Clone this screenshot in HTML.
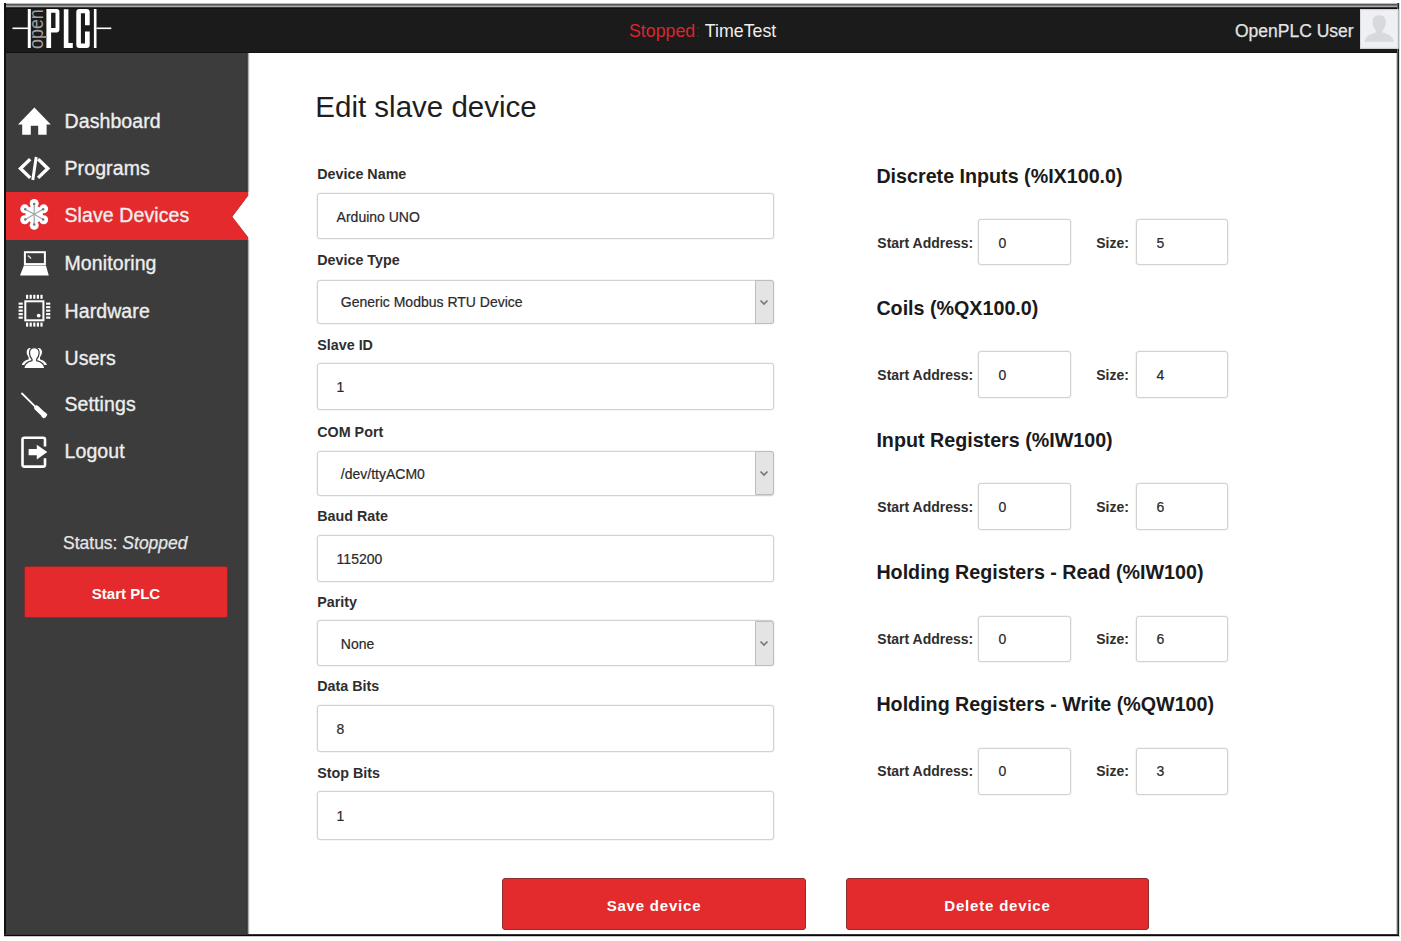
<!DOCTYPE html>
<html><head><meta charset="utf-8">
<style>
html,body{margin:0;padding:0;background:#fff;width:1401px;height:941px;overflow:hidden;position:relative;font-family:"Liberation Sans", sans-serif;}
.t{position:absolute;line-height:1;white-space:nowrap;font-family:"Liberation Sans", sans-serif;}
svg{overflow:visible}
</style></head><body>
<div style="position:absolute;left:5px;top:3px;width:1393px;height:1px;background:#bdbdbd;"></div>
<div style="position:absolute;left:5px;top:4px;width:1393px;height:1px;background:#555;"></div>
<div style="position:absolute;left:5px;top:5px;width:1393px;height:1px;background:#7a7a7a;"></div>
<div style="position:absolute;left:5px;top:6px;width:1393px;height:1px;background:#aaa;"></div>
<div style="position:absolute;left:5px;top:7px;width:1393px;height:1px;background:#3a3a3a;"></div>
<div style="position:absolute;left:5px;top:8px;width:1393px;height:1px;background:#111;"></div>
<div style="position:absolute;left:5px;top:9px;width:1393px;height:43px;background:#1b1b1b;"></div>
<div style="position:absolute;left:5px;top:52px;width:1393px;height:1px;background:#121212;"></div>
<div style="position:absolute;left:6px;top:53px;width:242px;height:881px;background:#3c3c3c;"></div>
<div style="position:absolute;left:246px;top:53px;width:1px;height:881px;background:#343434;"></div>
<div style="position:absolute;left:247px;top:53px;width:1px;height:881px;background:#4e4e4e;"></div>
<div style="position:absolute;left:248px;top:53px;width:1px;height:881px;background:#b0b0b0;"></div>
<div style="position:absolute;left:249px;top:53px;width:1px;height:881px;background:#efefef;"></div>
<div style="position:absolute;left:4px;top:3px;width:2px;height:934px;background:#111;"></div>
<div style="position:absolute;left:1396px;top:53px;width:1px;height:881px;background:#d0d0d0;"></div>
<div style="position:absolute;left:1397px;top:3px;width:1px;height:933px;background:#666;"></div>
<div style="position:absolute;left:1398px;top:3px;width:1px;height:933px;background:#222;"></div>
<div style="position:absolute;left:1399px;top:3px;width:1px;height:933px;background:#ddd;"></div>
<div style="position:absolute;left:4px;top:934px;width:1395px;height:1px;background:#333;"></div>
<div style="position:absolute;left:4px;top:935px;width:1395px;height:1px;background:#0a0a0a;"></div>
<div style="position:absolute;left:4px;top:936px;width:1396px;height:1px;background:#c8c8c8;"></div>
<svg style="position:absolute;left:0;top:0" width="120" height="55" viewBox="0 0 120 55">
<g fill="#fff">
<rect x="12.5" y="27.5" width="15.5" height="1.6"/>
<rect x="27.8" y="9" width="3" height="39"/>
<rect x="93.9" y="9" width="2.6" height="39"/>
<rect x="96.5" y="27.5" width="14.8" height="1.6"/>
<path d="M46.4 8.9 H56.6 Q59.4 8.9 59.4 11.7 V29.6 Q59.4 32.4 56.6 32.4 H51.1 V48 H46.4 Z M51.1 12.8 V28 H55.5 V12.8 Z" fill-rule="evenodd"/>
<path d="M63.8 9.2 H68.4 V43.1 H72.8 V48 H63.8 Z"/>
<path d="M79.3 8.9 H86.7 Q89.7 8.9 89.7 11.9 V25.3 H85 V13.3 H80.9 V43.6 H85 V31.4 H89.7 V45 Q89.7 48 86.7 48 H79.3 Q76.3 48 76.3 45 V11.9 Q76.3 8.9 79.3 8.9 Z" fill-rule="evenodd"/>
</g>
<text x="0" y="0" transform="translate(43.2 48.9) rotate(-90)" font-family="Liberation Sans" font-size="19.5" fill="#a0a0a0" textLength="39.6" lengthAdjust="spacingAndGlyphs">open</text>
</svg>
<div class="t" style="left:629.00px;top:22.93px;font-size:17.8px;font-weight:400;color:#333;font-style:normal;"><span style="color:#d92630">Stopped</span><span style="color:#3a2a28">:</span> <span style="color:#eeeeee">TimeTest</span></div>
<div class="t" style="left:1235.00px;top:23.49px;font-size:17.5px;font-weight:400;color:#e4e4e4;font-style:normal;-webkit-text-stroke:0.25px #e4e4e4;">OpenPLC User</div>
<svg style="position:absolute;left:1359.5px;top:8.5px" width="38.5" height="40" viewBox="0 0 39 40">
<rect x="0" y="0" width="39" height="40" fill="#eef0f3"/>
<rect x="0.5" y="0.5" width="38" height="39" fill="none" stroke="#d8dade" stroke-width="1"/>
<path d="M19.5 6 C14.5 6 12.5 9.5 12.8 13.5 C13 17 14.6 20.2 16.2 21.6 V23.5 C11 25 6 26.5 4.5 33 H34.5 C33 26.5 28 25 22.8 23.5 V21.6 C24.4 20.2 26 17 26.2 13.5 C26.5 9.5 24.5 6 19.5 6 Z" fill="#d6d9dd"/>
</svg>
<svg style="position:absolute;left:6px;top:192px" width="246" height="48" viewBox="0 0 246 48">
<path d="M226.2 24.8 L242.2 3.6 V0 H246 V48 H242.2 V45.6 Z" fill="#fff"/>
<path d="M0 0 H242.2 V3.6 L226.2 24.8 L242.2 45.6 V48 H0 Z" fill="#e42a2d"/>
</svg>
<div class="t" style="left:64.50px;top:111.89px;font-size:19.5px;font-weight:400;color:#eeeeee;font-style:normal;-webkit-text-stroke:0.35px #eeeeee;letter-spacing:0.1px;">Dashboard</div>
<div class="t" style="left:64.50px;top:159.49px;font-size:19.5px;font-weight:400;color:#eeeeee;font-style:normal;-webkit-text-stroke:0.35px #eeeeee;letter-spacing:0.1px;">Programs</div>
<div class="t" style="left:64.50px;top:206.49px;font-size:19.5px;font-weight:400;color:#eeeeee;font-style:normal;-webkit-text-stroke:0.35px #eeeeee;letter-spacing:0.1px;">Slave Devices</div>
<div class="t" style="left:64.50px;top:254.29px;font-size:19.5px;font-weight:400;color:#eeeeee;font-style:normal;-webkit-text-stroke:0.35px #eeeeee;letter-spacing:0.1px;">Monitoring</div>
<div class="t" style="left:64.50px;top:301.89px;font-size:19.5px;font-weight:400;color:#eeeeee;font-style:normal;-webkit-text-stroke:0.35px #eeeeee;letter-spacing:0.1px;">Hardware</div>
<div class="t" style="left:64.50px;top:348.69px;font-size:19.5px;font-weight:400;color:#eeeeee;font-style:normal;-webkit-text-stroke:0.35px #eeeeee;letter-spacing:0.1px;">Users</div>
<div class="t" style="left:64.50px;top:395.49px;font-size:19.5px;font-weight:400;color:#eeeeee;font-style:normal;-webkit-text-stroke:0.35px #eeeeee;letter-spacing:0.1px;">Settings</div>
<div class="t" style="left:64.50px;top:442.29px;font-size:19.5px;font-weight:400;color:#eeeeee;font-style:normal;-webkit-text-stroke:0.35px #eeeeee;letter-spacing:0.1px;">Logout</div>
<svg style="position:absolute;left:0;top:0" width="250" height="500" viewBox="0 0 250 500"><path d="M34.4 107.5 L50.8 124.6 H46.6 V134.8 H38.2 V125.8 H30.8 V134.8 H22.2 V124.6 H18 Z" fill="#fff"/><g fill="none" stroke="#fff" stroke-width="3.4" stroke-linecap="square"><path d="M29 160.3 L20.5 168.5 L29 176.7"/><path d="M39.3 160.3 L47.8 168.5 L39.3 176.7"/><path d="M36 158.5 L33 178.5" stroke-width="3"/></g><g transform="translate(34.2 214.3)"><g fill="#fff"><circle cx="0.00" cy="-10.90" r="4.5"/><circle cx="-9.44" cy="-5.45" r="4.5"/><circle cx="-9.44" cy="5.45" r="4.5"/><circle cx="-0.00" cy="10.90" r="4.5"/><circle cx="9.44" cy="5.45" r="4.5"/><circle cx="9.44" cy="-5.45" r="4.5"/><circle cx="0" cy="0" r="8.8"/></g><g stroke="#9ea6a8" stroke-width="1.2"><line x1="0" y1="0" x2="0.00" y2="-10.30"/><line x1="0" y1="0" x2="-8.92" y2="-5.15"/><line x1="0" y1="0" x2="-8.92" y2="5.15"/><line x1="0" y1="0" x2="-0.00" y2="10.30"/><line x1="0" y1="0" x2="8.92" y2="5.15"/><line x1="0" y1="0" x2="8.92" y2="-5.15"/></g><g fill="#6e7779"><circle cx="0.00" cy="-10.30" r="1.25"/><circle cx="-8.92" cy="-5.15" r="1.25"/><circle cx="-8.92" cy="5.15" r="1.25"/><circle cx="-0.00" cy="10.30" r="1.25"/><circle cx="8.92" cy="5.15" r="1.25"/><circle cx="8.92" cy="-5.15" r="1.25"/></g></g><rect x="24.9" y="252.2" width="20" height="11.9" fill="none" stroke="#fff" stroke-width="2"/><path d="M28 255.5 L31 258.5" stroke="#ddd" stroke-width="1.6"/><path d="M23.9 265.5 H45.9 L48.8 275.6 H20 Z" fill="#fff"/><rect x="25.3" y="301.3" width="18.1" height="19" fill="none" stroke="#fff" stroke-width="2"/><circle cx="38.7" cy="315.6" r="1.9" fill="#fff"/><g fill="#fff"><rect x="26.00" y="294.8" width="2.2" height="4"/><rect x="26.00" y="322.6" width="2.2" height="4"/><rect x="29.60" y="294.8" width="2.2" height="4"/><rect x="29.60" y="322.6" width="2.2" height="4"/><rect x="33.20" y="294.8" width="2.2" height="4"/><rect x="33.20" y="322.6" width="2.2" height="4"/><rect x="36.80" y="294.8" width="2.2" height="4"/><rect x="36.80" y="322.6" width="2.2" height="4"/><rect x="40.40" y="294.8" width="2.2" height="4"/><rect x="40.40" y="322.6" width="2.2" height="4"/><rect x="18.6" y="302.60" width="4.2" height="2.1"/><rect x="46.1" y="302.60" width="4.2" height="2.1"/><rect x="18.6" y="306.10" width="4.2" height="2.1"/><rect x="46.1" y="306.10" width="4.2" height="2.1"/><rect x="18.6" y="309.60" width="4.2" height="2.1"/><rect x="46.1" y="309.60" width="4.2" height="2.1"/><rect x="18.6" y="313.10" width="4.2" height="2.1"/><rect x="46.1" y="313.10" width="4.2" height="2.1"/><rect x="18.6" y="316.60" width="4.2" height="2.1"/><rect x="46.1" y="316.60" width="4.2" height="2.1"/></g><g fill="#fff" stroke="#3c3c3c" stroke-width="1.2"><path d="M21 365.5 C21.5 361.5 24.5 359.8 28 358.8 V357.3 C26.5 355.8 25.8 353.8 26 351.8 C26.3 349.3 27.6 347.3 30.2 347.3 C32.8 347.3 34 349.3 34.2 351.8 C34.4 353.8 33.7 355.8 32.2 357.3 V358.8 C35.7 359.8 38.7 361.5 39.2 365.5 Z"/><path d="M47.6 365.5 C47.1 361.5 44.1 359.8 40.6 358.8 V357.3 C42.1 355.8 42.8 353.8 42.6 351.8 C42.3 349.3 41 347.3 38.4 347.3 C35.8 347.3 34.6 349.3 34.4 351.8 C34.2 353.8 34.9 355.8 36.4 357.3 V358.8 C32.9 359.8 29.9 361.5 29.4 365.5 Z"/><path d="M34.3 347.6 C30.6 347.6 29.3 350.6 29.5 353.4 C29.7 356 30.8 358.2 32 359.2 V360.6 C27.8 361.6 24.2 363.2 23.7 368.6 H44.9 C44.4 363.2 40.8 361.6 36.6 360.6 V359.2 C37.8 358.2 38.9 356 39.1 353.4 C39.3 350.6 38 347.6 34.3 347.6 Z"/></g><g stroke="#fff" stroke-linecap="round"><line x1="22" y1="393.5" x2="36" y2="407.3" stroke-width="1.8"/><line x1="36.5" y1="407.8" x2="44.3" y2="415.3" stroke-width="4.8"/><line x1="43" y1="414" x2="45.5" y2="416.4" stroke-width="5.6" stroke-linecap="butt"/></g><path d="M45 446.5 V439.5 Q45 437.7 43.2 437.7 H24.3 Q22.5 437.7 22.5 439.5 V464.8 Q22.5 466.6 24.3 466.6 H43.2 Q45 466.6 45 464.8 V458.3" fill="none" stroke="#fff" stroke-width="2.6"/><path d="M28.6 449 H36.8 V444.8 L47.3 452 L36.8 459.4 V455.3 H28.6 Z" fill="#fff"/></svg>
<div class="t" style="left:63.00px;top:535.09px;font-size:17.5px;font-weight:400;color:#e6e6e6;font-style:normal;-webkit-text-stroke:0.25px #e6e6e6;">Status: <i>Stopped</i></div>
<div style="position:absolute;left:24px;top:566px;width:203.7px;height:51.60000000000002px;background:#e42a2c;border:1px solid #86292a;box-sizing:border-box;border-radius:2px;"></div>
<div class="t" style="left:24.00px;top:586.00px;font-size:15px;font-weight:700;color:#fff;font-style:normal;width:204px;text-align:center;">Start PLC</div>
<div class="t" style="left:315.30px;top:92.13px;font-size:29.5px;font-weight:400;color:#1e1e1e;font-style:normal;">Edit slave device</div>
<div class="t" style="left:317.30px;top:166.60px;font-size:14.3px;font-weight:700;color:#2e2e2e;font-style:normal;transform:scaleY(1.08);transform-origin:0 12.1px;">Device Name</div>
<div class="t" style="left:317.30px;top:253.00px;font-size:14.3px;font-weight:700;color:#2e2e2e;font-style:normal;transform:scaleY(1.08);transform-origin:0 12.1px;">Device Type</div>
<div class="t" style="left:317.30px;top:338.00px;font-size:14.3px;font-weight:700;color:#2e2e2e;font-style:normal;transform:scaleY(1.08);transform-origin:0 12.1px;">Slave ID</div>
<div class="t" style="left:317.30px;top:424.90px;font-size:14.3px;font-weight:700;color:#2e2e2e;font-style:normal;transform:scaleY(1.08);transform-origin:0 12.1px;">COM Port</div>
<div class="t" style="left:317.30px;top:508.90px;font-size:14.3px;font-weight:700;color:#2e2e2e;font-style:normal;transform:scaleY(1.08);transform-origin:0 12.1px;">Baud Rate</div>
<div class="t" style="left:317.30px;top:595.20px;font-size:14.3px;font-weight:700;color:#2e2e2e;font-style:normal;transform:scaleY(1.08);transform-origin:0 12.1px;">Parity</div>
<div class="t" style="left:317.30px;top:678.90px;font-size:14.3px;font-weight:700;color:#2e2e2e;font-style:normal;transform:scaleY(1.08);transform-origin:0 12.1px;">Data Bits</div>
<div class="t" style="left:317.30px;top:766.10px;font-size:14.3px;font-weight:700;color:#2e2e2e;font-style:normal;transform:scaleY(1.08);transform-origin:0 12.1px;">Stop Bits</div>
<div style="position:absolute;left:317px;top:193.29999999999998px;width:457px;height:46.20000000000002px;background:#fff;border:1px solid #d2d2d2;box-shadow:0 0 0 0.6px #ececec;box-sizing:border-box;border-radius:3px;"></div>
<div class="t" style="left:336.60px;top:209.55px;font-size:14px;font-weight:400;color:#2a2a2a;font-style:normal;transform:scaleY(1.1);transform-origin:0 11.85px;-webkit-text-stroke:0.2px #2a2a2a;">Arduino UNO</div>
<div style="position:absolute;left:317px;top:279.7px;width:457px;height:44.60000000000002px;background:#fff;border:1px solid #d2d2d2;box-shadow:0 0 0 0.6px #ececec;box-sizing:border-box;border-radius:3px;"></div>
<div style="position:absolute;left:754.5px;top:280px;width:19.0px;height:44px;background:#e4e4e4;border:1px solid #bdbdbd;box-sizing:border-box;border-radius:0 3px 3px 0;"></div>
<svg style="position:absolute;left:757px;top:296.00px" width="14" height="12" viewBox="0 0 14 12"><path d="M3.5 4.5 L7 8 L10.5 4.5" fill="none" stroke="#777" stroke-width="1.6"/></svg>
<div class="t" style="left:340.80px;top:294.85px;font-size:14px;font-weight:400;color:#2a2a2a;font-style:normal;transform:scaleY(1.1);transform-origin:0 11.85px;-webkit-text-stroke:0.2px #2a2a2a;">Generic Modbus RTU Device</div>
<div style="position:absolute;left:317px;top:363.4px;width:457px;height:46.50000000000006px;background:#fff;border:1px solid #d2d2d2;box-shadow:0 0 0 0.6px #ececec;box-sizing:border-box;border-radius:3px;"></div>
<div class="t" style="left:336.60px;top:380.45px;font-size:14px;font-weight:400;color:#2a2a2a;font-style:normal;transform:scaleY(1.1);transform-origin:0 11.85px;-webkit-text-stroke:0.2px #2a2a2a;">1</div>
<div style="position:absolute;left:317px;top:451.0px;width:457px;height:44.60000000000002px;background:#fff;border:1px solid #d2d2d2;box-shadow:0 0 0 0.6px #ececec;box-sizing:border-box;border-radius:3px;"></div>
<div style="position:absolute;left:754.5px;top:451.3px;width:19.0px;height:44.0px;background:#e4e4e4;border:1px solid #bdbdbd;box-sizing:border-box;border-radius:0 3px 3px 0;"></div>
<svg style="position:absolute;left:757px;top:467.30px" width="14" height="12" viewBox="0 0 14 12"><path d="M3.5 4.5 L7 8 L10.5 4.5" fill="none" stroke="#777" stroke-width="1.6"/></svg>
<div class="t" style="left:340.80px;top:466.75px;font-size:14px;font-weight:400;color:#2a2a2a;font-style:normal;transform:scaleY(1.1);transform-origin:0 11.85px;-webkit-text-stroke:0.2px #2a2a2a;">/dev/ttyACM0</div>
<div style="position:absolute;left:317px;top:535.2px;width:457px;height:46.59999999999991px;background:#fff;border:1px solid #d2d2d2;box-shadow:0 0 0 0.6px #ececec;box-sizing:border-box;border-radius:3px;"></div>
<div class="t" style="left:336.60px;top:551.95px;font-size:14px;font-weight:400;color:#2a2a2a;font-style:normal;transform:scaleY(1.1);transform-origin:0 11.85px;-webkit-text-stroke:0.2px #2a2a2a;">115200</div>
<div style="position:absolute;left:317px;top:620.4000000000001px;width:457px;height:45.79999999999984px;background:#fff;border:1px solid #d2d2d2;box-shadow:0 0 0 0.6px #ececec;box-sizing:border-box;border-radius:3px;"></div>
<div style="position:absolute;left:754.5px;top:620.7px;width:19.0px;height:45.19999999999993px;background:#e4e4e4;border:1px solid #bdbdbd;box-sizing:border-box;border-radius:0 3px 3px 0;"></div>
<svg style="position:absolute;left:757px;top:637.30px" width="14" height="12" viewBox="0 0 14 12"><path d="M3.5 4.5 L7 8 L10.5 4.5" fill="none" stroke="#777" stroke-width="1.6"/></svg>
<div class="t" style="left:340.80px;top:637.35px;font-size:14px;font-weight:400;color:#2a2a2a;font-style:normal;transform:scaleY(1.1);transform-origin:0 11.85px;-webkit-text-stroke:0.2px #2a2a2a;">None</div>
<div style="position:absolute;left:317px;top:705.2px;width:457px;height:47.09999999999991px;background:#fff;border:1px solid #d2d2d2;box-shadow:0 0 0 0.6px #ececec;box-sizing:border-box;border-radius:3px;"></div>
<div class="t" style="left:336.60px;top:722.35px;font-size:14px;font-weight:400;color:#2a2a2a;font-style:normal;transform:scaleY(1.1);transform-origin:0 11.85px;-webkit-text-stroke:0.2px #2a2a2a;">8</div>
<div style="position:absolute;left:317px;top:791.4000000000001px;width:457px;height:48.29999999999984px;background:#fff;border:1px solid #d2d2d2;box-shadow:0 0 0 0.6px #ececec;box-sizing:border-box;border-radius:3px;"></div>
<div class="t" style="left:336.60px;top:809.05px;font-size:14px;font-weight:400;color:#2a2a2a;font-style:normal;transform:scaleY(1.1);transform-origin:0 11.85px;-webkit-text-stroke:0.2px #2a2a2a;">1</div>
<div class="t" style="left:876.40px;top:167.22px;font-size:19.7px;font-weight:700;color:#1a1a1a;font-style:normal;">Discrete Inputs (%IX100.0)</div>
<div class="t" style="left:877.30px;top:235.95px;font-size:14px;font-weight:700;color:#2e2e2e;font-style:normal;transform:scaleY(1.06);transform-origin:0 11.85px;">Start Address:</div>
<div style="position:absolute;left:978px;top:218.8px;width:92.5px;height:46.69999999999999px;background:#fff;border:1px solid #d2d2d2;box-shadow:0 0 0 0.6px #ececec;box-sizing:border-box;border-radius:3px;"></div>
<div class="t" style="left:998.50px;top:235.95px;font-size:14px;font-weight:400;color:#2a2a2a;font-style:normal;transform:scaleY(1.1);transform-origin:0 11.85px;-webkit-text-stroke:0.2px #2a2a2a;">0</div>
<div class="t" style="left:1096.20px;top:235.95px;font-size:14px;font-weight:700;color:#2e2e2e;font-style:normal;transform:scaleY(1.06);transform-origin:0 11.85px;">Size:</div>
<div style="position:absolute;left:1136px;top:218.8px;width:92px;height:46.69999999999999px;background:#fff;border:1px solid #d2d2d2;box-shadow:0 0 0 0.6px #ececec;box-sizing:border-box;border-radius:3px;"></div>
<div class="t" style="left:1156.50px;top:235.95px;font-size:14px;font-weight:400;color:#2a2a2a;font-style:normal;transform:scaleY(1.1);transform-origin:0 11.85px;-webkit-text-stroke:0.2px #2a2a2a;">5</div>
<div class="t" style="left:876.40px;top:299.12px;font-size:19.7px;font-weight:700;color:#1a1a1a;font-style:normal;">Coils (%QX100.0)</div>
<div class="t" style="left:877.30px;top:368.05px;font-size:14px;font-weight:700;color:#2e2e2e;font-style:normal;transform:scaleY(1.06);transform-origin:0 11.85px;">Start Address:</div>
<div style="position:absolute;left:978px;top:351.1px;width:92.5px;height:46.69999999999999px;background:#fff;border:1px solid #d2d2d2;box-shadow:0 0 0 0.6px #ececec;box-sizing:border-box;border-radius:3px;"></div>
<div class="t" style="left:998.50px;top:368.05px;font-size:14px;font-weight:400;color:#2a2a2a;font-style:normal;transform:scaleY(1.1);transform-origin:0 11.85px;-webkit-text-stroke:0.2px #2a2a2a;">0</div>
<div class="t" style="left:1096.20px;top:368.05px;font-size:14px;font-weight:700;color:#2e2e2e;font-style:normal;transform:scaleY(1.06);transform-origin:0 11.85px;">Size:</div>
<div style="position:absolute;left:1136px;top:351.1px;width:92px;height:46.69999999999999px;background:#fff;border:1px solid #d2d2d2;box-shadow:0 0 0 0.6px #ececec;box-sizing:border-box;border-radius:3px;"></div>
<div class="t" style="left:1156.50px;top:368.05px;font-size:14px;font-weight:400;color:#2a2a2a;font-style:normal;transform:scaleY(1.1);transform-origin:0 11.85px;-webkit-text-stroke:0.2px #2a2a2a;">4</div>
<div class="t" style="left:876.40px;top:431.02px;font-size:19.7px;font-weight:700;color:#1a1a1a;font-style:normal;">Input Registers (%IW100)</div>
<div class="t" style="left:877.30px;top:500.15px;font-size:14px;font-weight:700;color:#2e2e2e;font-style:normal;transform:scaleY(1.06);transform-origin:0 11.85px;">Start Address:</div>
<div style="position:absolute;left:978px;top:483.40000000000003px;width:92.5px;height:46.69999999999999px;background:#fff;border:1px solid #d2d2d2;box-shadow:0 0 0 0.6px #ececec;box-sizing:border-box;border-radius:3px;"></div>
<div class="t" style="left:998.50px;top:500.15px;font-size:14px;font-weight:400;color:#2a2a2a;font-style:normal;transform:scaleY(1.1);transform-origin:0 11.85px;-webkit-text-stroke:0.2px #2a2a2a;">0</div>
<div class="t" style="left:1096.20px;top:500.15px;font-size:14px;font-weight:700;color:#2e2e2e;font-style:normal;transform:scaleY(1.06);transform-origin:0 11.85px;">Size:</div>
<div style="position:absolute;left:1136px;top:483.40000000000003px;width:92px;height:46.69999999999999px;background:#fff;border:1px solid #d2d2d2;box-shadow:0 0 0 0.6px #ececec;box-sizing:border-box;border-radius:3px;"></div>
<div class="t" style="left:1156.50px;top:500.15px;font-size:14px;font-weight:400;color:#2a2a2a;font-style:normal;transform:scaleY(1.1);transform-origin:0 11.85px;-webkit-text-stroke:0.2px #2a2a2a;">6</div>
<div class="t" style="left:876.40px;top:562.92px;font-size:19.7px;font-weight:700;color:#1a1a1a;font-style:normal;">Holding Registers - Read (%IW100)</div>
<div class="t" style="left:877.30px;top:632.25px;font-size:14px;font-weight:700;color:#2e2e2e;font-style:normal;transform:scaleY(1.06);transform-origin:0 11.85px;">Start Address:</div>
<div style="position:absolute;left:978px;top:615.7px;width:92.5px;height:46.700000000000045px;background:#fff;border:1px solid #d2d2d2;box-shadow:0 0 0 0.6px #ececec;box-sizing:border-box;border-radius:3px;"></div>
<div class="t" style="left:998.50px;top:632.25px;font-size:14px;font-weight:400;color:#2a2a2a;font-style:normal;transform:scaleY(1.1);transform-origin:0 11.85px;-webkit-text-stroke:0.2px #2a2a2a;">0</div>
<div class="t" style="left:1096.20px;top:632.25px;font-size:14px;font-weight:700;color:#2e2e2e;font-style:normal;transform:scaleY(1.06);transform-origin:0 11.85px;">Size:</div>
<div style="position:absolute;left:1136px;top:615.7px;width:92px;height:46.700000000000045px;background:#fff;border:1px solid #d2d2d2;box-shadow:0 0 0 0.6px #ececec;box-sizing:border-box;border-radius:3px;"></div>
<div class="t" style="left:1156.50px;top:632.25px;font-size:14px;font-weight:400;color:#2a2a2a;font-style:normal;transform:scaleY(1.1);transform-origin:0 11.85px;-webkit-text-stroke:0.2px #2a2a2a;">6</div>
<div class="t" style="left:876.40px;top:694.82px;font-size:19.7px;font-weight:700;color:#1a1a1a;font-style:normal;">Holding Registers - Write (%QW100)</div>
<div class="t" style="left:877.30px;top:764.35px;font-size:14px;font-weight:700;color:#2e2e2e;font-style:normal;transform:scaleY(1.06);transform-origin:0 11.85px;">Start Address:</div>
<div style="position:absolute;left:978px;top:748.0px;width:92.5px;height:46.700000000000045px;background:#fff;border:1px solid #d2d2d2;box-shadow:0 0 0 0.6px #ececec;box-sizing:border-box;border-radius:3px;"></div>
<div class="t" style="left:998.50px;top:764.35px;font-size:14px;font-weight:400;color:#2a2a2a;font-style:normal;transform:scaleY(1.1);transform-origin:0 11.85px;-webkit-text-stroke:0.2px #2a2a2a;">0</div>
<div class="t" style="left:1096.20px;top:764.35px;font-size:14px;font-weight:700;color:#2e2e2e;font-style:normal;transform:scaleY(1.06);transform-origin:0 11.85px;">Size:</div>
<div style="position:absolute;left:1136px;top:748.0px;width:92px;height:46.700000000000045px;background:#fff;border:1px solid #d2d2d2;box-shadow:0 0 0 0.6px #ececec;box-sizing:border-box;border-radius:3px;"></div>
<div class="t" style="left:1156.50px;top:764.35px;font-size:14px;font-weight:400;color:#2a2a2a;font-style:normal;transform:scaleY(1.1);transform-origin:0 11.85px;-webkit-text-stroke:0.2px #2a2a2a;">3</div>
<div style="position:absolute;left:502px;top:878px;width:304px;height:51.5px;background:#e32a2c;border:1px solid #8e2f2f;box-sizing:border-box;border-radius:3px;"></div>
<div class="t" style="left:502.00px;top:898.30px;font-size:15px;font-weight:700;color:#fff;font-style:normal;width:304px;text-align:center;letter-spacing:0.8px;">Save device</div>
<div style="position:absolute;left:846px;top:878px;width:303px;height:51.5px;background:#e32a2c;border:1px solid #8e2f2f;box-sizing:border-box;border-radius:3px;"></div>
<div class="t" style="left:846.00px;top:898.30px;font-size:15px;font-weight:700;color:#fff;font-style:normal;width:303px;text-align:center;letter-spacing:0.8px;">Delete device</div>

</body></html>
